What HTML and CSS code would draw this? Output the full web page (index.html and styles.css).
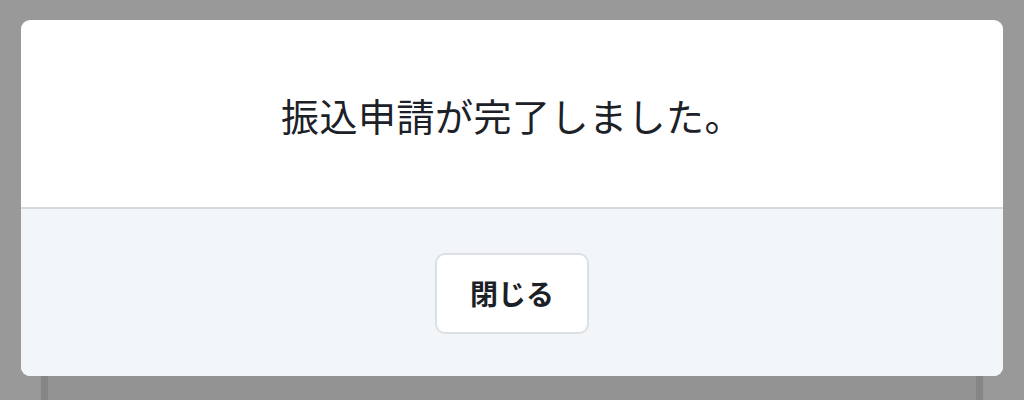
FILE: index.html
```html
<!DOCTYPE html>
<html lang="ja">
<head>
<meta charset="utf-8">
<link rel="stylesheet" href="styles.css">
</head>
<body>
<div class="modal">
  <div class="modal-body">
    <p class="message">振込申請が完了しました。</p>
  </div>
  <div class="modal-footer">
    <button class="btn-close" type="button">閉じる</button>
  </div>
</div>
<div class="underlay"></div>
</body>
</html>
```

FILE: styles.css
```css
html, body {
  margin: 0;
  padding: 0;
}
body {
  background: #999999;
  width: 1024px;
  height: 400px;
  overflow: hidden;
  font-family: "Noto Sans CJK JP", "Noto Sans", sans-serif;
}
.modal {
  margin: 20px 21px 0 21px;
  width: 982px;
  height: 356px;
  background: #ffffff;
  border-radius: 9px;
  overflow: hidden;
  display: flex;
  flex-direction: column;
}
.modal-body {
  height: 187px;
  display: flex;
  align-items: center;
  justify-content: center;
  border-bottom: 2px solid #d6d9dd;
}
.message {
  margin: 0;
  font-size: 38px;
  font-weight: 400;
  color: #1c2127;
  letter-spacing: 0.5px;
  transform: translateY(1px);
}
.modal-footer {
  flex: 1;
  background: #f3f6f9;
  display: flex;
  align-items: center;
  justify-content: center;
}
.btn-close {
  width: 154px;
  height: 81px;
  background: #ffffff;
  border: 2px solid #dcdfe3;
  border-radius: 10px;
  font-family: "Noto Sans CJK JP", "Noto Sans", sans-serif;
  font-size: 28px;
  font-weight: 700;
  color: #1c2127;
  padding: 0;
  margin-top: 1px;
}
.underlay {
  margin-left: 41px;
  width: 928px;
  height: 24px;
  background: #939393;
  border-left: 7px solid #868686;
  border-right: 7px solid #868686;
}
```
